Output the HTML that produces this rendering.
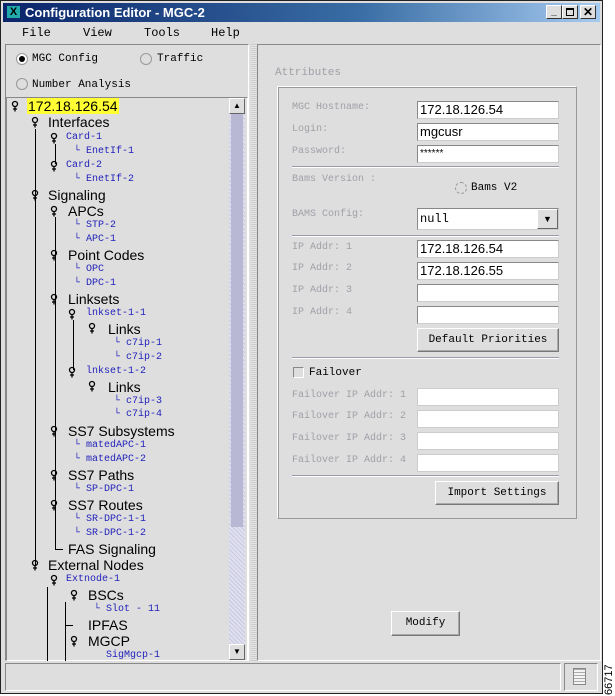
<!DOCTYPE html>
<html><head><style>
*{margin:0;padding:0;box-sizing:border-box}
body{width:615px;height:696px;background:#fff;position:relative;overflow:hidden;font-family:"Liberation Sans",sans-serif}
.a{position:absolute;white-space:nowrap}
.win{position:absolute;left:0;top:0;width:603px;height:694px;background:#dedede;border:1px solid #222}
.c{font-size:14px;color:#000;line-height:16px}
.l{font-family:"Liberation Mono",monospace;font-size:10px;color:#2222bb;line-height:14px}
.g{font-family:"Liberation Mono",monospace;font-size:10px;color:#a0a0a8;line-height:14px}
.in{position:absolute;left:416px;width:142px;height:18px;background:#fff;border:1px solid #888;border-right-color:#ccc;border-bottom-color:#ccc;font-size:13px;padding-left:2px;line-height:16px}
.btn{position:absolute;background:#dedede;border:1px solid;border-color:#fff #777 #777 #fff;font-family:"Liberation Mono",monospace;font-size:11px;text-align:center;box-shadow:inset -1px -1px 0 #aaa}
.hr{position:absolute;left:291px;width:267px;height:2px;border-top:1px solid #9a9aaa;border-bottom:1px solid #fff}
.v{position:absolute;width:1px;background:#000}
</style></head><body>
<div class="win">
<div class="a" style="left:2px;top:2px;width:597px;height:19px;background:linear-gradient(90deg,#0a246a,#3a6ea5 60%,#a6caf0)"></div>
<div class="a" style="left:6px;top:5px;width:13px;height:12px;background:#2aa;color:#000;font-size:11px;font-weight:bold;text-align:center;line-height:12px">X</div>
<div class="a" style="left:24px;top:3px;color:#fff;font-weight:bold;font-size:13px;line-height:17px">Configuration Editor - MGC-2</div>
<div class="a" style="left:545px;top:4px;width:16px;height:14px;background:#dedede;border:1px solid;border-color:#fff #333 #333 #fff;font-size:10px;text-align:center;font-weight:bold;line-height:12px">_</div>
<div class="a" style="left:561px;top:4px;width:16px;height:14px;background:#dedede;border:1px solid;border-color:#fff #333 #333 #fff"><div style="margin:2px 3px;width:8px;height:8px;border:1px solid #000;border-top-width:2px"></div></div>
<div class="a" style="left:579px;top:4px;width:16px;height:14px;background:#dedede;border:1px solid;border-color:#fff #333 #333 #fff;font-size:12px;text-align:center;font-weight:bold;line-height:12px">✕</div>
<div class="a" style="left:21px;top:25px;font-family:'Liberation Mono',monospace;font-size:12px">File</div>
<div class="a" style="left:82px;top:25px;font-family:'Liberation Mono',monospace;font-size:12px">View</div>
<div class="a" style="left:143px;top:25px;font-family:'Liberation Mono',monospace;font-size:12px">Tools</div>
<div class="a" style="left:210px;top:25px;font-family:'Liberation Mono',monospace;font-size:12px">Help</div>
<div class="a" style="left:4px;top:43px;width:244px;height:617px;border:1px solid;border-color:#888 #fff #fff #888"></div>
<div class="a" style="left:250px;top:43px;width:6px;height:617px;background:repeating-linear-gradient(0deg,#ccc 0 1px,#e6e6e6 1px 2px)"></div>
<div class="a" style="left:256px;top:43px;width:344px;height:617px;border:1px solid;border-color:#888 #fff #fff #888"></div>
<div class="a" style="left:15px;top:52px;width:12px;height:12px;border-radius:50%;border:1px solid #999;background:#fff"><div style="margin:2px;width:6px;height:6px;border-radius:50%;background:#000"></div></div>
<div class="a g" style="left:31px;top:51px;color:#000;font-size:11px">MGC Config</div>
<div class="a" style="left:139px;top:52px;width:12px;height:12px;border-radius:50%;border:1px solid #999"></div>
<div class="a g" style="left:156px;top:51px;color:#000;font-size:11px">Traffic</div>
<div class="a" style="left:15px;top:77px;width:12px;height:12px;border-radius:50%;border:1px solid #999"></div>
<div class="a g" style="left:31px;top:77px;color:#000;font-size:11px">Number Analysis</div>
<div class="a" style="left:5px;top:96px;width:242px;height:564px;border:1px solid;border-color:#888 #fff #fff #888"></div>
<div class="a" style="left:228px;top:97px;width:16px;height:562px;background:repeating-linear-gradient(45deg,#c8c8e0 0 1px,#e0e0ee 1px 3px)"></div>
<div class="a" style="left:228px;top:97px;width:16px;height:16px;background:#dedede;border:1px solid;border-color:#fff #666 #666 #fff;font-size:8px;text-align:center;line-height:14px">▲</div>
<div class="a" style="left:228px;top:643px;width:16px;height:16px;background:#dedede;border:1px solid;border-color:#fff #666 #666 #fff;font-size:8px;text-align:center;line-height:14px">▼</div>
<div class="a" style="left:230px;top:113px;width:12px;height:413px;background:#b8b8d4"></div>
<div class="v" style="left:34px;top:128px;height:436px"></div>
<div class="v" style="left:54px;top:143px;height:20px"></div>
<div class="v" style="left:54px;top:216px;height:332px"></div>
<div class="v" style="left:72px;top:319px;height:50px"></div>
<div class="v" style="left:46px;top:586px;height:74px"></div>
<div class="v" style="left:64px;top:601px;height:59px"></div>
<div class="a" style="left:54px;top:548px;width:8px;height:1px;background:#000"></div>
<div class="a" style="left:64px;top:624px;width:8px;height:1px;background:#000"></div>
<div class="a c" style="left:26px;top:97px;background:#ffff33;padding:0 1px">172.18.126.54</div>
<div class="a c" style="left:47px;top:113px">Interfaces</div>
<div class="a l" style="left:65px;top:130px">Card-1</div>
<div class="a l" style="left:73px;top:144px">└ EnetIf-1</div>
<div class="a l" style="left:65px;top:158px">Card-2</div>
<div class="a l" style="left:73px;top:172px">└ EnetIf-2</div>
<div class="a c" style="left:47px;top:186px">Signaling</div>
<div class="a c" style="left:67px;top:202px">APCs</div>
<div class="a l" style="left:73px;top:218px">└ STP-2</div>
<div class="a l" style="left:73px;top:232px">└ APC-1</div>
<div class="a c" style="left:67px;top:246px">Point Codes</div>
<div class="a l" style="left:73px;top:262px">└ OPC</div>
<div class="a l" style="left:73px;top:276px">└ DPC-1</div>
<div class="a c" style="left:67px;top:290px">Linksets</div>
<div class="a l" style="left:85px;top:306px">lnkset-1-1</div>
<div class="a c" style="left:107px;top:320px">Links</div>
<div class="a l" style="left:113px;top:336px">└ c7ip-1</div>
<div class="a l" style="left:113px;top:350px">└ c7ip-2</div>
<div class="a l" style="left:85px;top:364px">lnkset-1-2</div>
<div class="a c" style="left:107px;top:378px">Links</div>
<div class="a l" style="left:113px;top:394px">└ c7ip-3</div>
<div class="a l" style="left:113px;top:407px">└ c7ip-4</div>
<div class="a c" style="left:67px;top:422px">SS7 Subsystems</div>
<div class="a l" style="left:73px;top:438px">└ matedAPC-1</div>
<div class="a l" style="left:73px;top:452px">└ matedAPC-2</div>
<div class="a c" style="left:67px;top:466px">SS7 Paths</div>
<div class="a l" style="left:73px;top:482px">└ SP-DPC-1</div>
<div class="a c" style="left:67px;top:496px">SS7 Routes</div>
<div class="a l" style="left:73px;top:512px">└ SR-DPC-1-1</div>
<div class="a l" style="left:73px;top:526px">└ SR-DPC-1-2</div>
<div class="a c" style="left:67px;top:540px">FAS Signaling</div>
<div class="a c" style="left:47px;top:556px">External Nodes</div>
<div class="a l" style="left:65px;top:572px">Extnode-1</div>
<div class="a c" style="left:87px;top:586px">BSCs</div>
<div class="a l" style="left:93px;top:602px">└ Slot - 11</div>
<div class="a c" style="left:87px;top:616px">IPFAS</div>
<div class="a c" style="left:87px;top:632px">MGCP</div>
<div class="a" style="left:6px;top:647px;width:222px;height:12px;overflow:hidden"><div class="a l" style="left:99px;top:1px">SigMgcp-1</div></div>
<svg class="a" style="left:0;top:0" width="250" height="660">
<g fill="none" stroke="#000" stroke-width="1.3">
<g id="k"><circle cx="14" cy="103" r="2.5"/><path d="M14 105.5v5M12 108h4"/></g>
<use href="#k" x="20" y="16"/><use href="#k" x="39" y="32"/><use href="#k" x="39" y="60"/>
<use href="#k" x="20" y="89"/><use href="#k" x="39" y="105"/><use href="#k" x="39" y="149"/><use href="#k" x="39" y="193"/>
<use href="#k" x="57" y="208"/><use href="#k" x="77" y="222"/><use href="#k" x="57" y="266"/><use href="#k" x="77" y="280"/>
<use href="#k" x="39" y="325"/><use href="#k" x="39" y="369"/><use href="#k" x="39" y="399"/>
<use href="#k" x="20" y="459"/><use href="#k" x="39" y="474"/><use href="#k" x="59" y="489"/><use href="#k" x="59" y="535"/>
</g></svg>
<div class="a g" style="left:274px;top:65px;font-size:11px">Attributes</div>
<div class="a" style="left:276px;top:85px;width:300px;height:433px;border:1px solid;border-color:#fff #999 #999 #fff;box-shadow:inset 1px 1px 0 #999"></div>
<div class="a g" style="left:291px;top:100px">MGC Hostname:</div><div class="in" style="top:100px">172.18.126.54</div>
<div class="a g" style="left:291px;top:122px">Login:</div><div class="in" style="top:122px">mgcusr</div>
<div class="a g" style="left:291px;top:144px">Password:</div><div class="in" style="top:144px;font-size:10px">******</div>
<div class="hr" style="top:165px"></div>
<div class="a g" style="left:291px;top:172px">Bams Version :</div>
<div class="a" style="left:454px;top:181px;width:12px;height:12px;border-radius:50%;border:1px dashed #999"></div>
<div class="a g" style="left:470px;top:180px;color:#000;font-size:11px">Bams V2</div>
<div class="a g" style="left:291px;top:207px">BAMS Config:</div>
<div class="in" style="top:207px;height:22px;line-height:20px;font-family:'Liberation Mono',monospace;font-size:12px">null</div>
<div class="a" style="left:536px;top:208px;width:21px;height:20px;background:#dedede;border:1px solid;border-color:#fff #666 #666 #fff;font-size:9px;text-align:center;line-height:18px">▼</div>
<div class="hr" style="top:234px"></div>
<div class="a g" style="left:291px;top:240px">IP Addr: 1</div><div class="in" style="top:239px">172.18.126.54</div>
<div class="a g" style="left:291px;top:261px">IP Addr: 2</div><div class="in" style="top:261px">172.18.126.55</div>
<div class="a g" style="left:291px;top:283px">IP Addr: 3</div><div class="in" style="top:283px"></div>
<div class="a g" style="left:291px;top:305px">IP Addr: 4</div><div class="in" style="top:305px"></div>
<div class="btn" style="left:416px;top:327px;width:142px;height:24px;line-height:22px">Default Priorities</div>
<div class="hr" style="top:356px"></div>
<div class="a" style="left:292px;top:366px;width:11px;height:11px;border:1px solid #888;border-right-color:#fff;border-bottom-color:#fff"></div>
<div class="a g" style="left:308px;top:365px;color:#000;font-size:11px">Failover</div>
<div class="a g" style="left:291px;top:388px">Failover IP Addr: 1</div><div class="in" style="top:387px;border-color:#ccc"></div>
<div class="a g" style="left:291px;top:409px">Failover IP Addr: 2</div><div class="in" style="top:409px;border-color:#ccc"></div>
<div class="a g" style="left:291px;top:431px">Failover IP Addr: 3</div><div class="in" style="top:431px;border-color:#ccc"></div>
<div class="a g" style="left:291px;top:453px">Failover IP Addr: 4</div><div class="in" style="top:453px;border-color:#ccc"></div>
<div class="hr" style="top:474px"></div>
<div class="btn" style="left:434px;top:480px;width:124px;height:24px;line-height:22px">Import Settings</div>
<div class="btn" style="left:390px;top:610px;width:69px;height:25px;line-height:23px">Modify</div>
<div class="a" style="left:4px;top:662px;width:556px;height:28px;border:1px solid;border-color:#888 #fff #fff #888"></div>
<div class="a" style="left:563px;top:662px;width:34px;height:28px;border:1px solid;border-color:#888 #fff #fff #888"></div>
<div class="a" style="left:572px;top:667px;width:13px;height:17px;background:#f4f4f4;border:1px solid #888;background-image:repeating-linear-gradient(0deg,#f4f4f4 0 2px,#aaa 2px 3px)"></div>
</div>
<div class="a" style="left:603px;top:695px;transform:rotate(-90deg);transform-origin:left top;font-size:11px;line-height:12px">66717</div>
</body></html>
